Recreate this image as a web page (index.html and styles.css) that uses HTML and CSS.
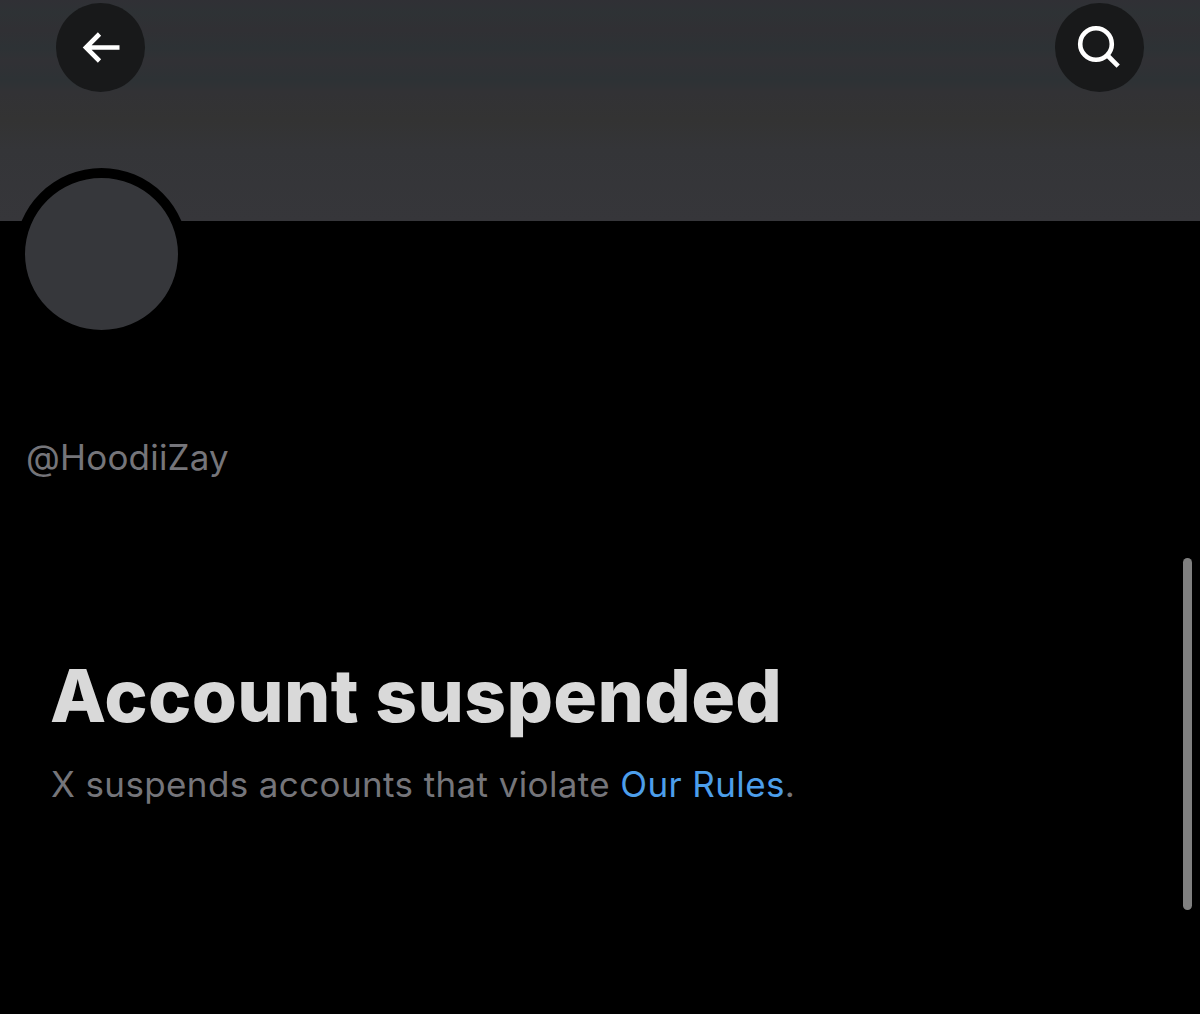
FILE: index.html
```
<!DOCTYPE html>
<html lang="en">
<head>
  <meta charset="UTF-8" />
  <meta name="viewport" content="width=device-width, initial-scale=1.0" />
  <title>Account suspended</title>
  <link rel="stylesheet" href="styles.css">
</head>
<body>

  <header class="banner">
    <button class="icon-button" aria-label="Back">
      <svg viewBox="0 0 89 89" fill="none" stroke="currentColor" stroke-width="4.6">
        <path d="M63.5 44.5H30M43.5 31L30 44.5L43.5 58" />
      </svg>
    </button>
    <button class="icon-button" aria-label="Search">
      <svg viewBox="0 0 89 89" fill="none" stroke="currentColor" stroke-width="4.6">
        <circle cx="41" cy="41" r="15.8" />
        <path d="M52 52L63.2 63.2" />
      </svg>
    </button>
  </header>

  <main class="profile">
    <div class="avatar"></div>
    <p class="handle">@HoodiiZay</p>

    <section class="notice">
      <h1>Account suspended</h1>
      <p>X suspends accounts that violate <a href="#">Our Rules</a>.</p>
    </section>
  </main>

  <div class="scrollbar"></div>

</body>
</html>
```

FILE: styles.css
```
:root {
  --background-color: #000;
  --surface-color: #36373b;
  --muted-color: #75757a;
  --link-color: #4c9eeb;
}

* {
  margin: 0;
  padding: 0;
  box-sizing: border-box;
}

body {
  height: 1014px;
  overflow: hidden;
  background: var(--background-color);
  color: var(--muted-color);
  font-family: Inter, "Liberation Sans", sans-serif;
  font-size: 35px;
  line-height: 44px;
}

.banner {
  display: flex;
  justify-content: space-between;
  align-items: flex-start;
  height: 221px;
  padding: 3px 56px;
  background: linear-gradient(#303035 0, #2e3235 12px, #303034 30px, #2d3235 48px, #313135 61px, #2d3235 80px, #323235 92px, #333333 120px, #343538 150px, #36363a 221px);
}

.icon-button {
  width: 89px;
  height: 89px;
  border: none;
  border-radius: 50%;
  background: #18191a;
  color: #fff;
}

.icon-button svg {
  display: block;
  width: 89px;
  height: 89px;
}

.profile {
  padding: 0 52px 0 26px;
}

.avatar {
  width: 173px;
  height: 172px;
  margin: -53px 0 0 -11px;
  border: 10px solid var(--background-color);
  border-radius: 50%;
  background: var(--surface-color);
}

.handle {
  margin-top: 95px;
  letter-spacing: 0.2px;
}

.notice {
  padding: 172px 0 0 25px;
}

.notice h1 {
  margin-left: -1px;
  color: #d9d9d9;
  font-size: 73px;
  font-weight: 800;
  line-height: 90px;
  letter-spacing: 0.35px;
}

.notice p {
  margin-top: 21px;
  letter-spacing: 0.38px;
}

.notice a {
  color: var(--link-color);
  text-decoration: none;
}

/* sits over the page edge */
.scrollbar {
  position: absolute;
  top: 558px;
  right: 8px;
  width: 9px;
  height: 352px;
  border-radius: 5px;
  background: #808080;
}
```
